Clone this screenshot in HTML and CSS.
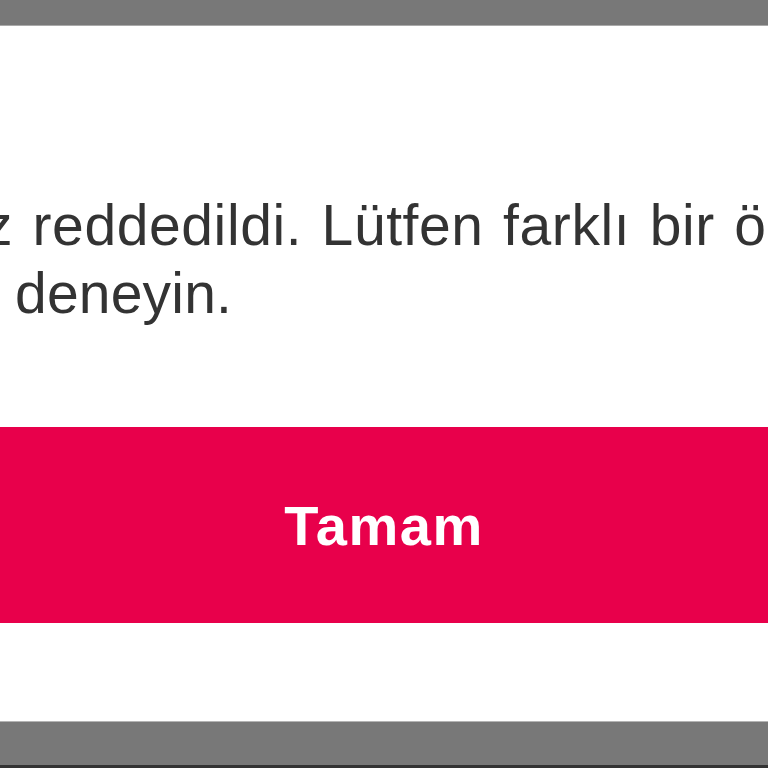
FILE: index.html
```html
<!DOCTYPE html>
<html lang="tr">
<head>
<meta charset="utf-8">
<link rel="stylesheet" href="styles.css">
</head>
<body>
<div class="top-bar"></div>
<main class="dialog">
  <div class="message">
    <span class="line line-first">z reddedildi. Lütfen farklı bir ödeme yöntemi</span>
    <span class="line line-second">deneyin.</span>
  </div>
  <button class="ok-button" type="button">Tamam</button>
</main>
<div class="bottom-bar"></div>
</body>
</html>
```

FILE: styles.css
```css
html, body {
  margin: 0;
  padding: 0;
  width: 768px;
  height: 768px;
  overflow: hidden;
  background: #ffffff;
  font-family: "Liberation Sans", Arial, sans-serif;
}

body {
  display: flex;
  flex-direction: column;
}

.top-bar {
  height: 25px;
  background: #787878;
  border-bottom: 1px solid #a9a9a9;
  flex: none;
}

.dialog {
  height: 695px;
  flex: none;
  background: #ffffff;
  display: flex;
  flex-direction: column;
  padding-top: 165px;
  box-sizing: border-box;
}

.message {
  color: #333333;
  font-size: 57px;
  line-height: 68px;
  display: flex;
  flex-direction: column;
  white-space: nowrap;
  overflow: hidden;
}

.line {
  display: block;
}

.line-first {
  margin-left: -16px;
  letter-spacing: 0.6px;
  word-spacing: 3px;
}

.line-second {
  padding-left: 15px;
  letter-spacing: 0.2px;
}

.ok-button {
  margin-top: 100px;
  height: 196px;
  width: 100%;
  border: none;
  background: #e8004b;
  color: #ffffff;
  font-family: "Liberation Sans", Arial, sans-serif;
  font-weight: bold;
  font-size: 56px;
  letter-spacing: 1.5px;
  display: flex;
  align-items: center;
  justify-content: center;
  padding: 0;
}

.bottom-bar {
  flex: none;
  height: 43px;
  background: #787878;
  border-top: 1px solid #b4b4b4;
  border-bottom: 3px solid #333333;
}
```
